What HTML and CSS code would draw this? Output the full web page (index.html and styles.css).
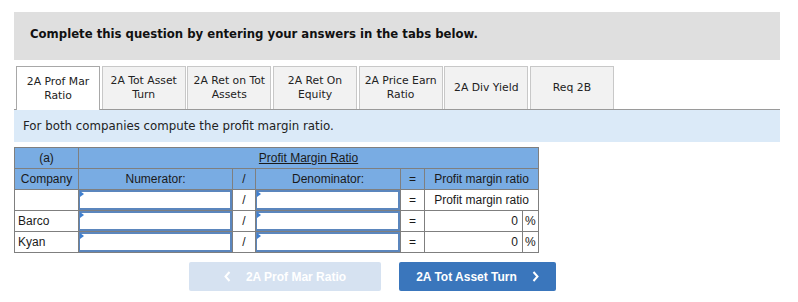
FILE: index.html
```html
<!DOCTYPE html>
<html lang="en">
<head>
    <meta charset="UTF-8">
    <title>Profit Margin Ratio</title>
    <link rel="stylesheet" href="styles.css">
</head>
<body>
    <div class="wrap">
        <div class="banner">Complete this question by entering your answers in the tabs below.</div>

        <div class="tabs">
            <div class="tab active">2A Prof Mar<br>Ratio</div>
            <div class="tab">2A Tot Asset<br>Turn</div>
            <div class="tab">2A Ret on Tot<br>Assets</div>
            <div class="tab">2A Ret On<br>Equity</div>
            <div class="tab">2A Price Earn<br>Ratio</div>
            <div class="tab">2A Div Yield</div>
            <div class="tab">Req 2B</div>
        </div>

        <div class="instructions">For both companies compute the profit margin ratio.</div>

        <table class="grid">
            <colgroup>
                <col style="width: 64px">
                <col style="width: 154px">
                <col style="width: 23px">
                <col style="width: 145px">
                <col style="width: 24px">
                <col style="width: 98px">
                <col style="width: 16px">
            </colgroup>
            <tr class="head">
                <td>(a)</td>
                <td colspan="6"><u>Profit Margin Ratio</u></td>
            </tr>
            <tr class="head">
                <td>Company</td>
                <td>Numerator:</td>
                <td>/</td>
                <td>Denominator:</td>
                <td>=</td>
                <td colspan="2">Profit margin ratio</td>
            </tr>
            <tr>
                <td></td>
                <td class="entry"><div class="box"></div></td>
                <td class="mid">/</td>
                <td class="entry"><div class="box"></div></td>
                <td class="mid">=</td>
                <td class="mid" colspan="2">Profit margin ratio</td>
            </tr>
            <tr>
                <td class="name">Barco</td>
                <td class="entry"><div class="box"></div></td>
                <td class="mid">/</td>
                <td class="entry"><div class="box"></div></td>
                <td class="mid">=</td>
                <td class="num">0</td>
                <td class="pct">%</td>
            </tr>
            <tr>
                <td class="name">Kyan</td>
                <td class="entry"><div class="box"></div></td>
                <td class="mid">/</td>
                <td class="entry"><div class="box"></div></td>
                <td class="mid">=</td>
                <td class="num">0</td>
                <td class="pct">%</td>
            </tr>
        </table>

        <div class="nav">
            <div class="btn prev">
                <svg width="7" height="11" viewBox="0 0 7 11"><path d="M5.5 1 L1.5 5.5 L5.5 10" fill="none" stroke="#fff" stroke-width="2"/></svg>
                <span>2A Prof Mar Ratio</span>
            </div>
            <div class="btn next">
                <span>2A Tot Asset Turn</span>
                <svg width="7" height="11" viewBox="0 0 7 11"><path d="M1.5 1 L5.5 5.5 L1.5 10" fill="none" stroke="#fff" stroke-width="2"/></svg>
            </div>
        </div>
    </div>
</body>
</html>
```

FILE: styles.css
```css
html, body {
    margin: 0;
    padding: 0;
    background: #ffffff;
    font-family: "DejaVu Sans", Verdana, sans-serif;
    color: #222222;
}

.wrap {
    width: 766px;
    padding: 12px 0 0 14px;
}

.banner {
    box-sizing: border-box;
    height: 48px;
    padding: 15px 16px 0;
    background: #dfdfdf;
    font-size: 11.7px;
    font-weight: bold;
    color: #111111;
}

.tabs {
    display: flex;
    gap: 1.67px;
    margin-top: 6px;
    padding-left: 2px;
    border-bottom: 1px solid #9a9a9a;
}

.tab {
    box-sizing: border-box;
    width: 84px;
    height: 43px;
    display: flex;
    align-items: center;
    justify-content: center;
    text-align: center;
    background: #f2f2f2;
    border: 1px solid #c8c8c8;
    border-bottom: none;
    font-size: 10.8px;
    line-height: 14px;
    color: #222222;
}

.tab.active {
    background: #ffffff;
    border-color: #a8a8a8;
    height: 44px;
    margin-bottom: -1px;
}

.instructions {
    height: 32px;
    display: flex;
    align-items: center;
    padding-left: 9px;
    background: #dbeaf8;
    font-size: 11.8px;
    color: #222222;
}

.grid {
    margin-top: 5px;
    border-collapse: collapse;
    table-layout: fixed;
    width: 524px;
    font-family: "Liberation Sans", Arial, sans-serif;
    font-size: 12px;
    color: #1a1a1a;
}

.grid td {
    border: 1px solid #7f7f7f;
    height: 20px;
    padding: 0 3px;
    text-align: center;
}

.grid tr.head td {
    background: #79ace3;
}

.grid td.name {
    text-align: left;
}

.grid td.num {
    text-align: right;
    padding-right: 4px;
}

.grid td.pct {
    text-align: left;
    padding: 0 2px;
}

.grid td.entry {
    padding: 0;
}

.box {
    position: relative;
    box-sizing: border-box;
    height: 20px;
    border: 2px solid #5b86bd;
    border-left-width: 1px;
    background: #ffffff;
}

.box::before {
    content: '';
    position: absolute;
    top: -1px;
    left: 0;
    border-top: 3px solid transparent;
    border-bottom: 3px solid transparent;
    border-left: 4px solid #3f7fcf;
}

.nav {
    display: flex;
    gap: 18px;
    margin-top: 9px;
    padding-left: 175px;
}

.btn {
    box-sizing: border-box;
    height: 29px;
    display: flex;
    align-items: center;
    justify-content: center;
    gap: 15px;
    border-radius: 2px;
    font-family: "Liberation Sans", Arial, sans-serif;
    font-size: 12px;
    font-weight: bold;
    color: #ffffff;
}

.btn.prev {
    width: 192px;
    background: #d6e2f1;
}

.btn.next {
    width: 157px;
    background: #3a76bc;
}
```
